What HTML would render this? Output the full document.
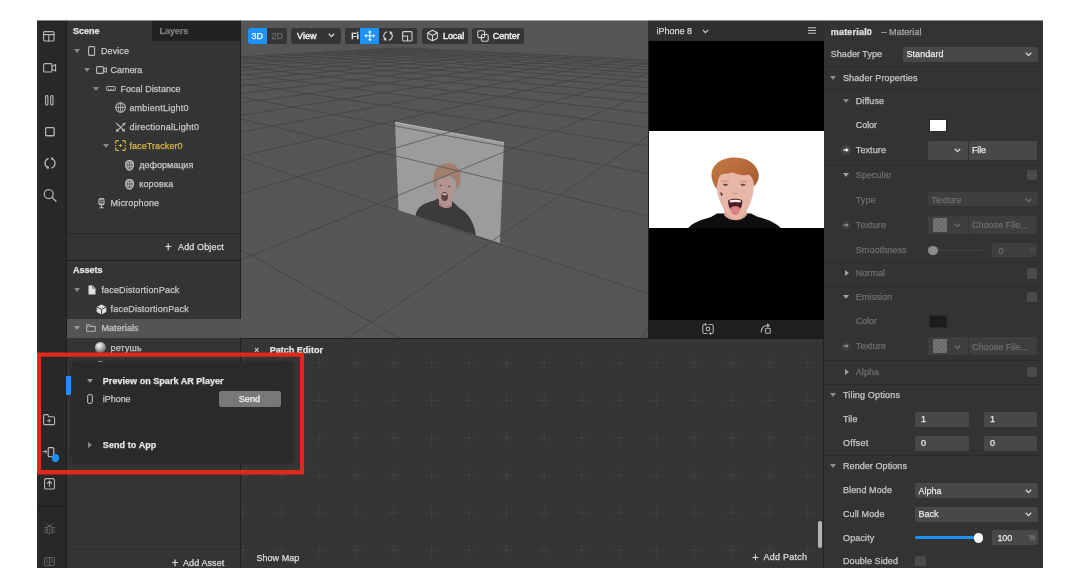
<!DOCTYPE html>
<html lang="en"><head><meta charset="utf-8"><title>Spark AR Studio</title>
<style>
*{box-sizing:border-box;margin:0;padding:0}
html,body{width:1080px;height:588px;background:#fff;overflow:hidden}
body{font-family:"Liberation Sans","DejaVu Sans",sans-serif;font-size:9px;color:#d6d6d6;position:relative}
.a{position:absolute}
.t{position:absolute;white-space:nowrap;line-height:12px;height:12px;font-size:9px;color:#c6c6c6;-webkit-text-stroke:0.25px}
.b{font-weight:bold;color:#e4e4e4}
.dim{color:#787878}
.f{position:absolute;background:#474747;border-radius:1.5px}
.sep{position:absolute;left:824px;width:219px;height:1px;background:#2b2b2b}
svg{position:absolute;overflow:visible}
.tri{position:absolute;width:0;height:0;border-left:3px solid transparent;border-right:3px solid transparent;border-top:4px solid #8a8a8a}
.trr{position:absolute;width:0;height:0;border-top:3px solid transparent;border-bottom:3px solid transparent;border-left:4px solid #8a8a8a}
</style></head>
<body>
<div id="app" style="position:absolute;left:0;top:0;width:1080px;height:588px;will-change:transform">
<div class="a" style="left:37px;top:20px;width:1006px;height:548px;background:#353535;"></div>
<div class="a" style="left:37px;top:20px;width:29px;height:548px;background:#282828;"></div>
<div class="a" style="left:66.5px;top:20px;width:174.5px;height:548px;background:#343434;"></div>
<div class="a" style="left:152px;top:20px;width:89px;height:21px;background:#222222;"></div>
<div class="a" style="left:241px;top:20px;width:407px;height:318px;background:#565656;"></div>
<div class="a" style="left:648px;top:20px;width:176px;height:319px;background:#1e1e1e;"></div>
<div class="a" style="left:824px;top:20px;width:219px;height:548px;background:#333333;"></div>
<div class="a" style="left:241px;top:339px;width:583px;height:229px;background:#353535;"></div>
<div class="a" style="left:240px;top:20px;width:1px;height:548px;background:#1f1f1f;"></div>
<div class="a" style="left:823px;top:20px;width:1px;height:548px;background:#1f1f1f;"></div>
<div class="a" style="left:241px;top:338px;width:583px;height:1px;background:#1f1f1f;"></div>
<svg style="left:241px;top:20px;overflow:hidden" width="407" height="318" viewBox="0 0 407 318"><defs><clipPath id="vpl"><polygon points="154,101.800 263,122.200 258.900,223 157.500,190.400"/></clipPath></defs><g stroke="#434343" stroke-width="0.85" fill="none"><line x1="-540.7" y1="67.4" x2="159.1" y2="27.8"/><line x1="-549.4" y1="72.0" x2="173.1" y2="28.5"/><line x1="-559.3" y1="77.3" x2="187.8" y2="29.2"/><line x1="-570.8" y1="83.5" x2="203.3" y2="29.9"/><line x1="-584.3" y1="90.7" x2="219.6" y2="30.7"/><line x1="-600.4" y1="99.3" x2="236.8" y2="31.6"/><line x1="-619.8" y1="109.7" x2="254.9" y2="32.4"/><line x1="-643.6" y1="122.4" x2="274.0" y2="33.4"/><line x1="-673.8" y1="138.6" x2="294.3" y2="34.4"/><line x1="-713.2" y1="159.6" x2="315.9" y2="35.4"/><line x1="-766.6" y1="188.2" x2="338.7" y2="36.5"/><line x1="-843.2" y1="229.1" x2="363.1" y2="37.7"/><line x1="-962.4" y1="292.9" x2="389.1" y2="39.0"/><line x1="-1173.5" y1="405.8" x2="416.9" y2="40.3"/><line x1="-1649.0" y1="660.1" x2="446.6" y2="41.8"/><line x1="-3719.0" y1="1767.2" x2="478.6" y2="43.4"/><line x1="-2643.1" y1="2164.8" x2="513.1" y2="45.0"/><line x1="-959.2" y1="2786.9" x2="550.3" y2="46.8"/><line x1="2050.9" y1="3899.1" x2="590.6" y2="48.8"/><line x1="8971.3" y1="6456.1" x2="634.5" y2="51.0"/><line x1="-540.7" y1="67.4" x2="-14613.7" y2="7594.0"/><line x1="-454.0" y1="62.5" x2="-4432.8" y2="6352.8"/><line x1="-379.8" y1="58.3" x2="2817.7" y2="5468.8"/><line x1="-315.6" y1="54.6" x2="3127.8" y2="1966.6"/><line x1="-259.5" y1="51.5" x2="1321.6" y2="578.9"/><line x1="-210.0" y1="48.7" x2="1011.8" y2="340.9"/><line x1="-166.1" y1="46.2" x2="883.5" y2="242.3"/><line x1="-126.9" y1="44.0" x2="813.3" y2="188.4"/><line x1="-91.6" y1="42.0" x2="769.1" y2="154.4"/><line x1="-59.7" y1="40.2" x2="738.6" y2="131.0"/><line x1="-30.7" y1="38.5" x2="716.4" y2="113.9"/><line x1="-4.2" y1="37.0" x2="699.4" y2="100.9"/><line x1="20.0" y1="35.6" x2="686.1" y2="90.6"/><line x1="42.3" y1="34.4" x2="675.3" y2="82.3"/><line x1="62.8" y1="33.2" x2="666.4" y2="75.5"/><line x1="81.9" y1="32.1" x2="658.9" y2="69.7"/><line x1="99.5" y1="31.1" x2="652.6" y2="64.9"/><line x1="116.0" y1="30.2" x2="647.1" y2="60.7"/><line x1="131.3" y1="29.3" x2="642.3" y2="57.0"/><line x1="145.6" y1="28.5" x2="638.2" y2="53.8"/><line x1="159.1" y1="27.8" x2="634.5" y2="51.0"/></g><polygon points="154,101.800 263,122.200 258.900,223 157.500,190.400" fill="#9c9c9c"/><line x1="154" y1="102.300" x2="263" y2="122.700" stroke="#b4b4b4" stroke-width="1"/><g clip-path="url(#vpl)"><path d="M174.400,196 C176,185 186,182.500 192,181 L198,178 L211,181 L219,188.500 C228,193 233.500,204 235,216 Z" fill="#3b3b3b"/><path d="M198,176 L198,185 C202,189 208,189 211,186 L211,176 Z" fill="#a88a84"/><ellipse cx="204.300" cy="171.500" rx="8.300" ry="14.500" fill="#b4948e"/><path d="M194.500,170 C190,158 193,146 204,143.500 C215,142 221,150 219.500,160 C219,165 217,168 215.500,170 C216,162 213,157 208,156 C203,158 199,158 197,159 C195.500,162 195.500,166 194.500,170 Z" fill="#a27e6c"/><ellipse cx="203.600" cy="176.500" rx="3.300" ry="4.600" fill="#5c4444"/><ellipse cx="203.600" cy="174.300" rx="2.400" ry="1" fill="#c8bcbc"/><ellipse cx="199.600" cy="165.500" rx="1.500" ry="0.700" fill="#6a5550"/><ellipse cx="208.200" cy="166.500" rx="1.500" ry="0.700" fill="#6a5550"/></g><g stroke="#585858" stroke-width="0.85" fill="none" clip-path="url(#vpl)"><line x1="-540.7" y1="67.4" x2="159.1" y2="27.8"/><line x1="-549.4" y1="72.0" x2="173.1" y2="28.5"/><line x1="-559.3" y1="77.3" x2="187.8" y2="29.2"/><line x1="-570.8" y1="83.5" x2="203.3" y2="29.9"/><line x1="-584.3" y1="90.7" x2="219.6" y2="30.7"/><line x1="-600.4" y1="99.3" x2="236.8" y2="31.6"/><line x1="-619.8" y1="109.7" x2="254.9" y2="32.4"/><line x1="-643.6" y1="122.4" x2="274.0" y2="33.4"/><line x1="-673.8" y1="138.6" x2="294.3" y2="34.4"/><line x1="-713.2" y1="159.6" x2="315.9" y2="35.4"/><line x1="-766.6" y1="188.2" x2="338.7" y2="36.5"/><line x1="-843.2" y1="229.1" x2="363.1" y2="37.7"/><line x1="-962.4" y1="292.9" x2="389.1" y2="39.0"/><line x1="-1173.5" y1="405.8" x2="416.9" y2="40.3"/><line x1="-1649.0" y1="660.1" x2="446.6" y2="41.8"/><line x1="-3719.0" y1="1767.2" x2="478.6" y2="43.4"/><line x1="-2643.1" y1="2164.8" x2="513.1" y2="45.0"/><line x1="-959.2" y1="2786.9" x2="550.3" y2="46.8"/><line x1="2050.9" y1="3899.1" x2="590.6" y2="48.8"/><line x1="8971.3" y1="6456.1" x2="634.5" y2="51.0"/><line x1="-540.7" y1="67.4" x2="-14613.7" y2="7594.0"/><line x1="-454.0" y1="62.5" x2="-4432.8" y2="6352.8"/><line x1="-379.8" y1="58.3" x2="2817.7" y2="5468.8"/><line x1="-315.6" y1="54.6" x2="3127.8" y2="1966.6"/><line x1="-259.5" y1="51.5" x2="1321.6" y2="578.9"/><line x1="-210.0" y1="48.7" x2="1011.8" y2="340.9"/><line x1="-166.1" y1="46.2" x2="883.5" y2="242.3"/><line x1="-126.9" y1="44.0" x2="813.3" y2="188.4"/><line x1="-91.6" y1="42.0" x2="769.1" y2="154.4"/><line x1="-59.7" y1="40.2" x2="738.6" y2="131.0"/><line x1="-30.7" y1="38.5" x2="716.4" y2="113.9"/><line x1="-4.2" y1="37.0" x2="699.4" y2="100.9"/><line x1="20.0" y1="35.6" x2="686.1" y2="90.6"/><line x1="42.3" y1="34.4" x2="675.3" y2="82.3"/><line x1="62.8" y1="33.2" x2="666.4" y2="75.5"/><line x1="81.9" y1="32.1" x2="658.9" y2="69.7"/><line x1="99.5" y1="31.1" x2="652.6" y2="64.9"/><line x1="116.0" y1="30.2" x2="647.1" y2="60.7"/><line x1="131.3" y1="29.3" x2="642.3" y2="57.0"/><line x1="145.6" y1="28.5" x2="638.2" y2="53.8"/><line x1="159.1" y1="27.8" x2="634.5" y2="51.0"/></g></svg>
<div class="a" style="left:247.5px;top:27.5px;width:39.0px;height:16.5px;background:#353535;border-radius:2.5px"></div>
<div class="a" style="left:247.5px;top:27.5px;width:19.5px;height:16.5px;background:#1a93ff;border-radius:2.5px 0 0 2.5px"></div>
<div class="t " style="left:251.5px;top:29.8px;color:#fff;font-size:9px">3D</div>
<div class="t " style="left:271.5px;top:29.8px;color:#6d6d6d;font-size:9px">2D</div>
<div class="a" style="left:290.5px;top:27.5px;width:50.0px;height:16.5px;background:#353535;border-radius:2.5px"></div>
<div class="t " style="left:297px;top:29.8px;letter-spacing:0.04px;color:#ececec;-webkit-text-stroke:0.45px">View</div>
<svg style="left:328px;top:33px;" width="7" height="5" viewBox="0 0 7 5"><path d="M0.8,0.8 L3.5,3.6 L6.2,0.8" fill="none" stroke="#d8d8d8" stroke-width="1.3"/></svg>
<div class="a" style="left:344.7px;top:27.5px;width:72.80000000000001px;height:16.5px;background:#353535;border-radius:2.5px"></div>
<div class="t " style="left:351.2px;top:29.8px;color:#ececec;-webkit-text-stroke:0.45px">Fi</div>
<div class="a" style="left:360px;top:27.5px;width:18.600000000000023px;height:16.5px;background:#1a93ff;border-radius:0"></div>
<svg style="left:363.7px;top:30.2px;" width="11.6" height="11.6" viewBox="0 0 11.6 11.6"><g stroke="#fff" stroke-width="1.100" fill="none"><path d="M5.800,1.600V10M1.600,5.800H10"/></g><path d="M5.800,0.300L7.600,2.600H4ZM5.800,11.300L7.600,9H4ZM0.300,5.800L2.600,4V7.600ZM11.300,5.800L9,4V7.600Z" fill="#fff"/></svg>
<svg style="left:382.2px;top:29.8px;" width="12" height="12" viewBox="0 0 12 12"><path d="M5.25,1.77A4.3,4.3 0 0 0 2.96,9.04M6.75,10.23A4.3,4.3 0 0 0 9.04,2.96" stroke="#d0d0d0" stroke-width="1.15" fill="none"/><path d="M4.66,10.74L1.19,9.96L3.88,7.27ZM7.34,1.26L10.81,2.04L8.12,4.73Z" fill="#d0d0d0"/></svg>
<svg style="left:402.2px;top:30.6px;" width="10.6" height="10.6" viewBox="0 0 10.6 10.6"><g stroke="#d0d0d0" stroke-width="1.100" fill="none"><rect x="0.600" y="0.600" width="9.400" height="9.400" rx="1.200"/><path d="M0.600,5H5.600V10"/></g></svg>
<div class="a" style="left:421.7px;top:27.5px;width:46.10000000000002px;height:16.5px;background:#353535;border-radius:2.5px"></div>
<svg style="left:425.8px;top:29.4px;" width="13" height="13" viewBox="0 0 13 13"><g stroke="#d8d8d8" stroke-width="1.05" fill="none" stroke-linejoin="round"><path d="M6.5,1.2L11.3,3.8V9.2L6.5,11.8L1.7,9.2V3.8Z"/><path d="M1.7,3.8L6.5,6.5L11.3,3.8M6.5,6.5V11.8"/></g></svg>
<div class="t " style="left:443px;top:29.8px;letter-spacing:-0.08px;color:#ececec;-webkit-text-stroke:0.45px">Local</div>
<div class="a" style="left:471.7px;top:27.5px;width:52.69999999999999px;height:16.5px;background:#353535;border-radius:2.5px"></div>
<svg style="left:477px;top:29.5px;" width="12" height="12" viewBox="0 0 12 12"><g stroke="#d8d8d8" stroke-width="1.05" fill="none"><rect x="0.8" y="0.8" width="6.8" height="6.8" rx="1.4"/><rect x="4.4" y="4.4" width="6.8" height="6.8" rx="1.4"/></g></svg>
<div class="t " style="left:492.8px;top:29.8px;letter-spacing:0.01px;color:#ececec;-webkit-text-stroke:0.45px">Center</div>
<div class="a" style="left:648px;top:20px;width:176px;height:20.5px;background:#2f2f2f;"></div>
<div class="t " style="left:656.5px;top:24.5px;color:#d8d8d8;font-size:9px">iPhone 8</div>
<svg style="left:702px;top:28.6px;" width="7" height="5" viewBox="0 0 7 5"><path d="M0.8,0.8 L3.5,3.6 L6.2,0.8" fill="none" stroke="#d0d0d0" stroke-width="1.2"/></svg>
<svg style="left:807.5px;top:27px;" width="8" height="7" viewBox="0 0 8 7"><path d="M0,0.8H8M0,3.5H8M0,6.2H8" stroke="#c8c8c8" stroke-width="1"/></svg>
<div class="a" style="left:649px;top:40.5px;width:174.5px;height:279px;background:#000;"></div>
<div class="a" style="left:649px;top:130.5px;width:174.5px;height:97.5px;background:#fff;"></div>
<svg style="left:649px;top:130.5px;overflow:hidden" width="174.5" height="97.5" viewBox="0 0 174.5 97.5"><defs><filter id="sblur" x="-5%" y="-5%" width="110%" height="110%"><feGaussianBlur stdDeviation="0.45"/></filter><linearGradient id="hairg" x1="0" y1="0" x2="1" y2="1"><stop offset="0" stop-color="#c47a45"/><stop offset="0.55" stop-color="#b5683a"/><stop offset="1" stop-color="#9a5530"/></linearGradient></defs><g filter="url(#sblur)"><path d="M38,98.500 C43,91 54,88.500 62,86 L68,82.500 L102,82.500 L109,86 C119,88.500 128,92 133,98.500 Z" fill="#0b0b0d"/><path d="M76,76 L75,84 C80,91 93,91 98,84 L97,76 Z" fill="#dca595"/><path d="M68,48 C67,56 68.500,64 71,70 C73.500,77 79,87.800 86.500,87.800 C94,87.800 99.500,78 102,70 C104.500,63 105.500,55 104.500,47 C102,38 94,35 86,35 C77,35 70,39 68,48 Z" fill="#e8b6a7"/><path d="M67.500,58 C65,54 62,48 62.500,43 C63,35 70,28.500 80,27 C90,25.500 101,28 106,35 C109,39 110.500,43 109.500,47.500 C108.500,51 106.500,53.500 105,55.500 C105,50 103.500,46 100,43.500 C96,45 90,44 84,41.500 C79,42.500 74,43 71.500,44 C69,47 68.500,52 67.500,58 Z" fill="url(#hairg)"/><path d="M79.200,69.500 C82,67.300 90.500,67.300 93.200,69.500 C93.500,75 91.500,80.500 86.200,80.500 C81,80.500 79,75 79.200,69.500 Z" fill="#4d1a20"/><path d="M80.500,69.600 C83,68.300 89.500,68.300 92,69.600 L91.500,71.600 C88.500,70.800 84,70.800 81,71.600 Z" fill="#f6eeee"/><path d="M81.500,77 C83,74.800 89.500,74.800 91,77 C91,81.500 89,84 86.200,84 C83.500,84 81.500,81.500 81.500,77 Z" fill="#dc8085"/><ellipse cx="76.500" cy="53.800" rx="2.500" ry="1.100" fill="#6a4a42"/><ellipse cx="94" cy="53.800" rx="2.500" ry="1.100" fill="#6a4a42"/><path d="M73,50.800 C75,49.800 78,49.800 80,50.800M91,50.800 C93,49.800 96,49.800 98,50.800" stroke="#b07a5e" stroke-width="0.700" fill="none"/><path d="M83.500,62 C84.500,63.200 87.500,63.200 88.500,62" stroke="#c48878" stroke-width="0.800" fill="none"/><path d="M71.300,60.500 L74,63.500 L72,65 Z" fill="#3a2a2e"/></g></svg>
<div class="a" style="left:648px;top:319.5px;width:176px;height:19.5px;background:#1e1e1e;"></div>
<svg style="left:700.5px;top:322px;" width="14" height="14" viewBox="0 0 14 14"><g stroke="#aeaeae" stroke-width="1.1" fill="none"><path d="M5,2.500H3.300A1.500,1.500 0 0 0 1.800,4V10A1.500,1.500 0 0 0 3.300,11.500H6.500M9,11.500H10.700A1.500,1.500 0 0 0 12.200,10V4A1.500,1.500 0 0 0 10.700,2.500H7.500"/><circle cx="7" cy="7" r="1.900"/><path d="M4,1L5.600,2.500L4,4M10,10L8.400,11.500L10,13" stroke-width="1"/></g></svg>
<svg style="left:759px;top:322px;" width="14" height="14" viewBox="0 0 14 14"><g stroke="#aeaeae" stroke-width="1.100" fill="none"><rect x="6.600" y="6.300" width="4.600" height="5" rx="0.600"/><path d="M2.200,10.500C2.200,6 4.800,3.400 9,3.400"/></g><path d="M8.200,1L11,3.400L8.200,5.800Z" fill="#aeaeae"/></svg>
<div class="a" style="left:65.5px;top:20px;width:1px;height:548px;background:#1d1d1d;"></div>
<svg style="left:43.1px;top:31.4px;" width="11.6" height="10.6" viewBox="0 0 11.6 10.6"><g stroke="#b6b6b6" stroke-width="1.15" fill="none" stroke-linecap="round" stroke-linejoin="round"><rect x="0.600" y="0.600" width="10.400" height="9.400" rx="1"/><path d="M0.600,3.700H11M5.800,3.700V10"/></g></svg>
<svg style="left:43.0px;top:63.1px;" width="13.2" height="9.6" viewBox="0 0 13.2 9.6"><g stroke="#b6b6b6" stroke-width="1.15" fill="none" stroke-linecap="round" stroke-linejoin="round"><rect x="0.600" y="0.600" width="8.400" height="8.400" rx="1.300"/><path d="M9,3.400L12.600,1.600V8L9,6.200"/></g></svg>
<svg style="left:44.95px;top:95.0px;" width="8.6" height="10.6" viewBox="0 0 8.6 10.6"><g stroke="#b6b6b6" stroke-width="1.1" fill="none" stroke-linecap="round" stroke-linejoin="round"><rect x="0.600" y="0.600" width="2.300" height="9.400" rx="1"/><rect x="5.700" y="0.600" width="2.300" height="9.400" rx="1"/></g></svg>
<svg style="left:44.9px;top:126.8px;" width="9.8" height="9.4" viewBox="0 0 9.8 9.4"><g stroke="#b6b6b6" stroke-width="1.3" fill="none" stroke-linecap="round" stroke-linejoin="round"><rect x="0.650" y="0.650" width="8.500" height="8.100" rx="0.900"/></g></svg>
<svg style="left:43.7px;top:156.5px;" width="12" height="12.4" viewBox="0 0 12 12.4"><g stroke="#b6b6b6" stroke-width="1.25" fill="none" stroke-linecap="round" stroke-linejoin="round"><path d="M4.13,1.56A5,5 0 0 0 3.65,10.61M7.87,10.84A5,5 0 0 0 8.35,1.79"/><path d="M5.49,11.59L2.40,11.87L3.99,8.87ZM6.51,0.81L9.60,0.53L8.01,3.53Z" fill="#b6b6b6" stroke="none"/></g></svg>
<svg style="left:43.2px;top:188.0px;" width="14" height="14" viewBox="0 0 14 14"><g stroke="#b6b6b6" stroke-width="1.25" fill="none" stroke-linecap="round" stroke-linejoin="round"><circle cx="5.700" cy="6" r="4.500"/><path d="M9,9.300L13,13.300"/></g></svg>
<svg style="left:43.0px;top:414.4px;" width="12.2" height="11.2" viewBox="0 0 12.2 11.2"><g stroke="#b6b6b6" stroke-width="1.1" fill="none" stroke-linecap="round" stroke-linejoin="round"><path d="M0.600,2.800V9.400A1.200,1.200 0 0 0 1.800,10.600H10.400A1.200,1.200 0 0 0 11.600,9.400V3.900A1.200,1.200 0 0 0 10.400,2.700H5.800L4.700,0.600H1.800A1.200,1.200 0 0 0 0.600,1.800Z"/><path d="M6.100,5V8.400M4.400,6.700H7.800" stroke-width="0.900"/></g></svg>
<svg style="left:42px;top:446px;" width="14" height="13" viewBox="0 0 14 13"><g stroke="#c4c4c4" fill="none" stroke-linejoin="round"><rect x="6.200" y="1.600" width="5.600" height="9.200" rx="1" stroke-width="1.100"/><path d="M0.800,5.700H4.600M3.300,4.300L4.800,5.700L3.300,7.100" stroke-width="1"/></g></svg>
<div class="a" style="left:51.500px;top:454.400px;width:7.400px;height:7.400px;border-radius:50%;background:#1a93ff"></div>
<svg style="left:43.8px;top:477.8px;" width="11" height="11.6" viewBox="0 0 11 11.6"><g stroke="#b6b6b6" stroke-width="1.1" fill="none" stroke-linecap="round" stroke-linejoin="round"><rect x="0.600" y="0.600" width="9.800" height="10.400" rx="1.300"/><path d="M5.500,8.600V3.400M3.400,5.300L5.500,3.200L7.600,5.300"/></g></svg>
<div class="a" style="left:37px;top:506px;width:28.5px;height:1px;background:#1a1a1a;"></div>
<svg style="left:43.7px;top:523.3px;" width="11.4" height="12.4" viewBox="0 0 11.4 12.4"><g stroke="#6a6a6a" stroke-width="0.9" fill="none" stroke-linecap="round" stroke-linejoin="round"><rect x="3.200" y="3" width="5" height="7.600" rx="2.300"/><path d="M3.600,0.800L4.700,3M7.800,0.800L6.700,3M0.600,4.600H3.200M8.200,4.600H10.800M0.600,7H3.200M8.200,7H10.800M0.600,9.400H3.200M8.200,9.400H10.800M5.700,5V9" stroke-width="0.800"/></g></svg>
<svg style="left:43.9px;top:556.5px;" width="11" height="9" viewBox="0 0 11 9"><g stroke="#6a6a6a" stroke-width="0.9" fill="none" stroke-linecap="round" stroke-linejoin="round"><rect x="0.600" y="0.600" width="9.800" height="7.800" rx="0.700"/><path d="M5.500,0.600V8.400M2.200,3H3.900M2.200,5H3.900M7.100,3H8.800M7.100,5H8.800" stroke-width="0.800"/></g></svg>
<div class="t b" style="left:73px;top:25.4px;letter-spacing:-0.02px;">Scene</div>
<div class="t b" style="left:159.5px;top:25.4px;letter-spacing:-0.05px;color:#7e7e7e">Layers</div>
<div class="tri" style="left:74px;top:48.8px;border-top-color:#8a8a8a"></div>
<svg style="left:87.85000000000001px;top:45.8px;" width="7.2" height="10" viewBox="0 0 7.2 10"><g stroke="#b8b8b8" stroke-width="1.1" fill="none" stroke-linejoin="round"><rect x="0.600" y="0.600" width="6" height="8.800" rx="1"/></g></svg>
<div class="t " style="left:101px;top:44.8px;letter-spacing:0.08px;">Device</div>
<div class="tri" style="left:84px;top:67.8px;border-top-color:#8a8a8a"></div>
<svg style="left:96.1px;top:66.0px;" width="11" height="8" viewBox="0 0 11 8"><g stroke="#b8b8b8" stroke-width="1.1" fill="none" stroke-linejoin="round"><rect x="0.600" y="0.600" width="6.800" height="6.800" rx="1"/><path d="M7.900,2.600L10.400,1.800V6.200L7.900,5.400Z"/></g></svg>
<div class="t " style="left:110.6px;top:63.8px;letter-spacing:-0.07px;">Camera</div>
<div class="tri" style="left:93.3px;top:86.6px;border-top-color:#8a8a8a"></div>
<svg style="left:105.7px;top:85.89999999999999px;" width="10.4" height="5.4" viewBox="0 0 10.4 5.4"><g stroke="#b8b8b8" stroke-width="1" fill="none" stroke-linejoin="round"><rect x="0.600" y="0.600" width="8.800" height="3.800" rx="0.600"/><path d="M2.600,2.600V4.400M4.200,2.600V4.400M5.800,2.600V4.400M7.400,2.600V4.400" stroke-width="0.700"/></g></svg>
<div class="t " style="left:120.4px;top:82.6px;letter-spacing:0.05px;">Focal Distance</div>
<svg style="left:114.9px;top:102.3px;" width="11" height="11" viewBox="0 0 11 11"><g stroke="#b8b8b8" stroke-width="1.1" fill="none" stroke-linejoin="round"><circle cx="5.500" cy="5.500" r="4.800"/><ellipse cx="5.500" cy="5.500" rx="2.100" ry="4.800" stroke-width="0.800"/><path d="M0.700,5.500H10.300M5.500,0.700V10.300" stroke-width="0.800"/></g></svg>
<div class="t " style="left:129.4px;top:102.0px;letter-spacing:0.22px;">ambientLight0</div>
<svg style="left:115.2px;top:122.3px;" width="11" height="10.6" viewBox="0 0 11 10.6"><g stroke="#b8b8b8" stroke-width="1" fill="none" stroke-linejoin="round"><path d="M1.200,1L8.600,8.200M9.400,1.800L2.400,8.600" stroke-width="1.100"/><path d="M10.200,9.800L6.600,9L9.400,6.200ZM0.800,10L1.600,6.600L4.400,9.200ZM10.600,0.600L9.800,3.800L7.200,1.400Z" fill="#b8b8b8" stroke="none"/></g></svg>
<div class="t " style="left:129.4px;top:121.0px;letter-spacing:0.26px;">directionalLight0</div>
<div class="tri" style="left:102.5px;top:143.5px;border-top-color:#8a8a8a"></div>
<svg style="left:114.9px;top:140.3px;" width="11" height="11" viewBox="0 0 11 11"><g stroke="#d4b84a" stroke-width="1.2" fill="none" stroke-linejoin="round"><path d="M0.700,3.600V1.700A1,1 0 0 1 1.700,0.700H3.800M7.200,0.700H9.300A1,1 0 0 1 10.300,1.700V3.600M10.300,7.400V9.300A1,1 0 0 1 9.300,10.300H7.200M3.800,10.300H1.700A1,1 0 0 1 0.700,9.300V7.400M0.700,4.900V6.100M10.300,4.900V6.100"/><path d="M5.500,3.900V7.100M3.900,5.500H7.100" stroke-width="1.100"/></g></svg>
<div class="t " style="left:129.4px;top:139.5px;letter-spacing:0.09px;color:#d4b84a">faceTracker0</div>
<svg style="left:125.19999999999999px;top:159.6px;" width="9" height="10.8" viewBox="0 0 9 10.8"><g stroke="#c4c4c4" stroke-width="1" fill="none" stroke-linejoin="round"><path d="M4.500,0.700C7.300,0.700 8.300,2.400 8.300,4.700C8.300,7.500 6.700,10.100 4.500,10.100C2.300,10.100 0.700,7.500 0.700,4.700C0.700,2.400 1.700,0.700 4.500,0.700Z" stroke-width="1.300" fill="rgba(200,200,200,0.25)"/><path d="M3.200,1.200V9.600M5.800,1.200V9.600M1,3.400H8M1,6.400H8" stroke-width="0.700"/></g></svg>
<div class="t " style="left:139.2px;top:158.5px;letter-spacing:0.02px;">деформация</div>
<svg style="left:125.19999999999999px;top:178.79999999999998px;" width="9" height="10.8" viewBox="0 0 9 10.8"><g stroke="#c4c4c4" stroke-width="1" fill="none" stroke-linejoin="round"><path d="M4.500,0.700C7.300,0.700 8.300,2.400 8.300,4.700C8.300,7.500 6.700,10.100 4.500,10.100C2.300,10.100 0.700,7.500 0.700,4.700C0.700,2.400 1.700,0.700 4.500,0.700Z" stroke-width="1.300" fill="rgba(200,200,200,0.25)"/><path d="M3.200,1.200V9.600M5.800,1.200V9.600M1,3.400H8M1,6.400H8" stroke-width="0.700"/></g></svg>
<div class="t " style="left:139.2px;top:177.9px;letter-spacing:0.19px;">коровка</div>
<svg style="left:97.9px;top:197.8px;" width="7" height="10.4" viewBox="0 0 7 10.4"><g stroke="#c8c8c8" stroke-width="1" fill="none" stroke-linejoin="round"><rect x="1" y="0.600" width="5" height="6.200" rx="1" fill="rgba(210,210,210,0.55)"/><path d="M1,2.600H6M1,4.400H6" stroke="#444" stroke-width="0.700"/><path d="M3.500,6.800V9.600M1.400,9.800H5.600" stroke-width="1"/></g></svg>
<div class="t " style="left:110.6px;top:196.7px;letter-spacing:0.16px;">Microphone</div>
<div class="a" style="left:67px;top:233px;width:174px;height:1px;background:#262626;"></div>
<div class="t " style="left:164.8px;top:240.8px;font-size:12px;color:#d8d8d8">+</div>
<div class="t " style="left:178px;top:241.0px;letter-spacing:0.14px;color:#dcdcdc">Add Object</div>
<div class="a" style="left:67px;top:260px;width:174px;height:1px;background:#1c1c1c;"></div>
<div class="t b" style="left:73px;top:264.4px;letter-spacing:-0.02px;">Assets</div>
<div class="tri" style="left:74px;top:288.2px;border-top-color:#8a8a8a"></div>
<svg style="left:87.5px;top:285px;" width="8" height="10" viewBox="0 0 8 10"><path d="M0.500,0.500H4.800L7.500,3.200V9.500H0.500Z" fill="#e0e0e0"/><path d="M4.800,0.500V3.200H7.500" fill="none" stroke="#353535" stroke-width="0.700"/></svg>
<div class="t " style="left:101.4px;top:284.2px;letter-spacing:0.17px;">faceDistortionPack</div>
<svg style="left:96.2px;top:303.7px;" width="11" height="11" viewBox="0 0 11 11"><path d="M5.500,0.500L10.300,2.900V8.100L5.500,10.500L0.700,8.100V2.900Z" fill="#e0e0e0"/><path d="M0.700,2.900L5.500,5.400L10.300,2.900M5.500,5.400V10.500" fill="none" stroke="#353535" stroke-width="0.900"/></svg>
<div class="t " style="left:110.6px;top:303.2px;letter-spacing:0.18px;">faceDistortionPack</div>
<div class="a" style="left:67px;top:319px;width:174px;height:18.5px;background:#545454;"></div>
<div class="tri" style="left:74px;top:326.4px;border-top-color:#9a9a9a"></div>
<svg style="left:86.2px;top:324.4px;" width="10" height="8" viewBox="0 0 10 8"><g stroke="#b8b8b8" stroke-width="1" fill="none" stroke-linejoin="round"><path d="M0.700,1.700V7.300H9.300V2.300H4.600L3.800,0.700H0.700Z"/><path d="M0.700,2.600H9.300" stroke-width="0.600"/></g></svg>
<div class="t " style="left:101.4px;top:322.4px;letter-spacing:0.08px;">Materials</div>
<div class="a" style="left:94.9px;top:342.0px;width:11px;height:11px;border-radius:50%;background:radial-gradient(circle at 38% 32%,#fafafa 0%,#b8b8b8 35%,#5a5a5a 80%,#444 100%)"></div>
<div class="t " style="left:110.6px;top:342.0px;letter-spacing:0.14px;">ретушь</div>
<div class="a" style="left:94.9px;top:361.0px;width:11px;height:11px;border-radius:50%;background:radial-gradient(circle at 38% 32%,#fafafa 0%,#b8b8b8 35%,#5a5a5a 80%,#444 100%)"></div>
<div class="a" style="left:67px;top:549px;width:174px;height:1px;background:#2d2d2d;"></div>
<div class="t " style="left:171.5px;top:557.0px;font-size:12px;color:#d8d8d8">+</div>
<div class="t " style="left:183px;top:557.3px;letter-spacing:0.10px;color:#dcdcdc">Add Asset</div>
<svg style="left:241px;top:339px;overflow:hidden" width="583" height="229" viewBox="0 0 583 229"><g stroke="#424242" stroke-width="1" fill="none"><path d="M-3.2,23.9h12M2.8,17.9v12"/><path d="M-3.2,61.4h12M2.8,55.4v12"/><path d="M-3.2,98.9h12M2.8,92.9v12"/><path d="M-3.2,136.4h12M2.8,130.4v12"/><path d="M-3.2,173.9h12M2.8,167.9v12"/><path d="M-3.2,211.4h12M2.8,205.4v12"/><path d="M34.4,23.9h12M40.4,17.9v12"/><path d="M34.4,61.4h12M40.4,55.4v12"/><path d="M34.4,98.9h12M40.4,92.9v12"/><path d="M34.4,136.4h12M40.4,130.4v12"/><path d="M34.4,173.9h12M40.4,167.9v12"/><path d="M34.4,211.4h12M40.4,205.4v12"/><path d="M71.9,23.9h12M77.9,17.9v12"/><path d="M71.9,61.4h12M77.9,55.4v12"/><path d="M71.9,98.9h12M77.9,92.9v12"/><path d="M71.9,136.4h12M77.9,130.4v12"/><path d="M71.9,173.9h12M77.9,167.9v12"/><path d="M71.9,211.4h12M77.9,205.4v12"/><path d="M109.4,23.9h12M115.4,17.9v12"/><path d="M109.4,61.4h12M115.4,55.4v12"/><path d="M109.4,98.9h12M115.4,92.9v12"/><path d="M109.4,136.4h12M115.4,130.4v12"/><path d="M109.4,173.9h12M115.4,167.9v12"/><path d="M109.4,211.4h12M115.4,205.4v12"/><path d="M147.0,23.9h12M153.0,17.9v12"/><path d="M147.0,61.4h12M153.0,55.4v12"/><path d="M147.0,98.9h12M153.0,92.9v12"/><path d="M147.0,136.4h12M153.0,130.4v12"/><path d="M147.0,173.9h12M153.0,167.9v12"/><path d="M147.0,211.4h12M153.0,205.4v12"/><path d="M184.6,23.9h12M190.6,17.9v12"/><path d="M184.6,61.4h12M190.6,55.4v12"/><path d="M184.6,98.9h12M190.6,92.9v12"/><path d="M184.6,136.4h12M190.6,130.4v12"/><path d="M184.6,173.9h12M190.6,167.9v12"/><path d="M184.6,211.4h12M190.6,205.4v12"/><path d="M222.1,23.9h12M228.1,17.9v12"/><path d="M222.1,61.4h12M228.1,55.4v12"/><path d="M222.1,98.9h12M228.1,92.9v12"/><path d="M222.1,136.4h12M228.1,130.4v12"/><path d="M222.1,173.9h12M228.1,167.9v12"/><path d="M222.1,211.4h12M228.1,205.4v12"/><path d="M259.6,23.9h12M265.6,17.9v12"/><path d="M259.6,61.4h12M265.6,55.4v12"/><path d="M259.6,98.9h12M265.6,92.9v12"/><path d="M259.6,136.4h12M265.6,130.4v12"/><path d="M259.6,173.9h12M265.6,167.9v12"/><path d="M259.6,211.4h12M265.6,205.4v12"/><path d="M297.2,23.9h12M303.2,17.9v12"/><path d="M297.2,61.4h12M303.2,55.4v12"/><path d="M297.2,98.9h12M303.2,92.9v12"/><path d="M297.2,136.4h12M303.2,130.4v12"/><path d="M297.2,173.9h12M303.2,167.9v12"/><path d="M297.2,211.4h12M303.2,205.4v12"/><path d="M334.8,23.9h12M340.8,17.9v12"/><path d="M334.8,61.4h12M340.8,55.4v12"/><path d="M334.8,98.9h12M340.8,92.9v12"/><path d="M334.8,136.4h12M340.8,130.4v12"/><path d="M334.8,173.9h12M340.8,167.9v12"/><path d="M334.8,211.4h12M340.8,205.4v12"/><path d="M372.3,23.9h12M378.3,17.9v12"/><path d="M372.3,61.4h12M378.3,55.4v12"/><path d="M372.3,98.9h12M378.3,92.9v12"/><path d="M372.3,136.4h12M378.3,130.4v12"/><path d="M372.3,173.9h12M378.3,167.9v12"/><path d="M372.3,211.4h12M378.3,205.4v12"/><path d="M409.8,23.9h12M415.8,17.9v12"/><path d="M409.8,61.4h12M415.8,55.4v12"/><path d="M409.8,98.9h12M415.8,92.9v12"/><path d="M409.8,136.4h12M415.8,130.4v12"/><path d="M409.8,173.9h12M415.8,167.9v12"/><path d="M409.8,211.4h12M415.8,205.4v12"/><path d="M447.4,23.9h12M453.4,17.9v12"/><path d="M447.4,61.4h12M453.4,55.4v12"/><path d="M447.4,98.9h12M453.4,92.9v12"/><path d="M447.4,136.4h12M453.4,130.4v12"/><path d="M447.4,173.9h12M453.4,167.9v12"/><path d="M447.4,211.4h12M453.4,205.4v12"/><path d="M485.0,23.9h12M491.0,17.9v12"/><path d="M485.0,61.4h12M491.0,55.4v12"/><path d="M485.0,98.9h12M491.0,92.9v12"/><path d="M485.0,136.4h12M491.0,130.4v12"/><path d="M485.0,173.9h12M491.0,167.9v12"/><path d="M485.0,211.4h12M491.0,205.4v12"/><path d="M522.5,23.9h12M528.5,17.9v12"/><path d="M522.5,61.4h12M528.5,55.4v12"/><path d="M522.5,98.9h12M528.5,92.9v12"/><path d="M522.5,136.4h12M528.5,130.4v12"/><path d="M522.5,173.9h12M528.5,167.9v12"/><path d="M522.5,211.4h12M528.5,205.4v12"/><path d="M560.0,23.9h12M566.0,17.9v12"/><path d="M560.0,61.4h12M566.0,55.4v12"/><path d="M560.0,98.9h12M566.0,92.9v12"/><path d="M560.0,136.4h12M566.0,130.4v12"/><path d="M560.0,173.9h12M566.0,167.9v12"/><path d="M560.0,211.4h12M566.0,205.4v12"/></g></svg>
<div class="t " style="left:254.3px;top:343.8px;font-size:8.5px;color:#d8d8d8">×</div>
<div class="t b" style="left:269.7px;top:344.0px;letter-spacing:0.02px;">Patch Editor</div>
<div class="t " style="left:256.4px;top:551.5px;letter-spacing:0.06px;color:#dcdcdc">Show Map</div>
<div class="t " style="left:752.3px;top:551.0px;font-size:11px;color:#dcdcdc">+</div>
<div class="t " style="left:763.5px;top:551.3px;letter-spacing:0.24px;color:#dcdcdc">Add Patch</div>
<div class="t b" style="left:830.8px;top:26.1px;letter-spacing:0.19px;">material0</div>
<div class="t " style="left:881.5px;top:26.1px;letter-spacing:0.05px;color:#a8a8a8">– Material</div>
<div class="t " style="left:830.8px;top:48.0px;letter-spacing:0.03px;">Shader Type</div>
<div class="f" style="left:903px;top:47px;width:134.5px;height:14.5px;background:#484848"></div>
<div class="t " style="left:906.5px;top:48.0px;letter-spacing:0.06px;color:#e8e8e8">Standard</div>
<svg style="left:1025.0px;top:52.099999999999994px;" width="7" height="5" viewBox="0 0 7 5"><path d="M0.800,0.800 L3.500,3.600 L6.200,0.800" fill="none" stroke="#d8d8d8" stroke-width="1.3"/></svg>
<div class="sep" style="top:66px"></div>
<div class="tri" style="left:830.4px;top:75.5px;border-top-color:#8a8a8a"></div>
<div class="t " style="left:843px;top:71.5px;letter-spacing:0.12px;">Shader Properties</div>
<div class="sep" style="top:89px"></div>
<div class="tri" style="left:843px;top:99.2px;border-top-color:#8a8a8a"></div>
<div class="t " style="left:855.8px;top:95.2px;letter-spacing:0.05px;">Diffuse</div>
<div class="t " style="left:855.8px;top:119.2px;letter-spacing:-0.06px;">Color</div>
<div class="a" style="left:929px;top:118.800px;width:18.500px;height:13px;background:#2a2a2a;border-radius:1.5px"></div>
<div class="a" style="left:930.300px;top:120px;width:16px;height:10.600px;background:#fff"></div>
<div class="a" style="left:841px;top:145.2px;width:10px;height:10px;border-radius:50%;background:#444444"></div>
<svg style="left:842px;top:146.2px;" width="8" height="8" viewBox="0 0 8 8"><path d="M1.600,4H5" fill="none" stroke="#f0f0f0" stroke-width="1.500"/><path d="M4.200,1.800L6.900,4L4.200,6.200Z" fill="#f0f0f0"/></svg>
<div class="t " style="left:855.8px;top:144.2px;letter-spacing:0.10px;">Texture</div>
<div class="f" style="left:928px;top:141.3px;width:39.5px;height:18.3px;background:#484848"></div>
<svg style="left:954.0px;top:148.3px;" width="7" height="5" viewBox="0 0 7 5"><path d="M0.800,0.800 L3.500,3.600 L6.200,0.800" fill="none" stroke="#d8d8d8" stroke-width="1.3"/></svg>
<div class="f" style="left:968.8px;top:141.3px;width:68.7px;height:18.3px;background:#484848"></div>
<div class="t " style="left:972px;top:144.4px;letter-spacing:-0.13px;color:#e8e8e8">File</div>
<div class="sep" style="top:164.5px"></div>
<div class="tri" style="left:843px;top:173.3px;border-top-color:#a0a0a0"></div>
<div class="t " style="left:855.8px;top:169.3px;letter-spacing:0.02px;color:#6e6e6e">Specular</div>
<div class="f" style="left:1027.2px;top:170px;width:10.3px;height:10.4px;background:#4a4a4a"></div>
<div class="t " style="left:855.8px;top:193.5px;letter-spacing:0.05px;color:#6e6e6e">Type</div>
<div class="f" style="left:928px;top:192.4px;width:109.5px;height:14.0px;background:#3e3e3e"></div>
<div class="t " style="left:931.5px;top:193.6px;letter-spacing:0.07px;color:#6e6e6e">Texture</div>
<svg style="left:1025.0px;top:197.60000000000002px;" width="7" height="5" viewBox="0 0 7 5"><path d="M0.800,0.800 L3.500,3.600 L6.200,0.800" fill="none" stroke="#6e6e6e" stroke-width="1.3"/></svg>
<div class="a" style="left:841px;top:219.8px;width:10px;height:10px;border-radius:50%;background:#3b3b3b"></div>
<svg style="left:842px;top:220.8px;" width="8" height="8" viewBox="0 0 8 8"><path d="M1.600,4H5" fill="none" stroke="#8c8c8c" stroke-width="1.500"/><path d="M4.200,1.800L6.900,4L4.200,6.200Z" fill="#8c8c8c"/></svg>
<div class="t " style="left:855.8px;top:218.8px;letter-spacing:0.10px;color:#6e6e6e">Texture</div>
<div class="f" style="left:928px;top:216px;width:39.5px;height:17.7px;background:#3e3e3e"></div>
<svg style="left:932.8px;top:217.8px;" width="14" height="14" viewBox="0 0 14 14"><rect width="14" height="14" fill="#777"/><g fill="#686868"><rect x="0.00" y="0.00" width="2.33" height="2.33"/><rect x="0.00" y="4.67" width="2.33" height="2.33"/><rect x="0.00" y="9.33" width="2.33" height="2.33"/><rect x="2.33" y="2.33" width="2.33" height="2.33"/><rect x="2.33" y="7.00" width="2.33" height="2.33"/><rect x="2.33" y="11.67" width="2.33" height="2.33"/><rect x="4.67" y="0.00" width="2.33" height="2.33"/><rect x="4.67" y="4.67" width="2.33" height="2.33"/><rect x="4.67" y="9.33" width="2.33" height="2.33"/><rect x="7.00" y="2.33" width="2.33" height="2.33"/><rect x="7.00" y="7.00" width="2.33" height="2.33"/><rect x="7.00" y="11.67" width="2.33" height="2.33"/><rect x="9.33" y="0.00" width="2.33" height="2.33"/><rect x="9.33" y="4.67" width="2.33" height="2.33"/><rect x="9.33" y="9.33" width="2.33" height="2.33"/><rect x="11.67" y="2.33" width="2.33" height="2.33"/><rect x="11.67" y="7.00" width="2.33" height="2.33"/><rect x="11.67" y="11.67" width="2.33" height="2.33"/></g></svg>
<svg style="left:954.0px;top:223.0px;" width="7" height="5" viewBox="0 0 7 5"><path d="M0.800,0.800 L3.500,3.600 L6.200,0.800" fill="none" stroke="#6e6e6e" stroke-width="1.3"/></svg>
<div class="f" style="left:968.8px;top:216px;width:68.7px;height:17.7px;background:#3e3e3e"></div>
<div class="t " style="left:972px;top:218.9px;letter-spacing:0.03px;color:#6e6e6e">Choose File...</div>
<div class="t " style="left:855.8px;top:244.3px;letter-spacing:0.07px;color:#6e6e6e">Smoothness</div>
<div class="a" style="left:933px;top:249.8px;width:49px;height:1px;background:#444;"></div>
<div class="a" style="left:928.200px;top:245.500px;width:9.600px;height:9.600px;border-radius:50%;background:#8c8c8c"></div>
<div class="f" style="left:992.3px;top:243.4px;width:45.2px;height:14.0px;background:#3e3e3e"></div>
<div class="t " style="left:998.5px;top:244.5px;color:#6e6e6e">0</div>
<div class="t " style="left:1029px;top:244.5px;color:#4e4e4e;font-size:7px">%</div>
<div class="sep" style="top:262px"></div>
<div class="trr" style="left:844.5px;top:270.4px;border-left-color:#a0a0a0"></div>
<div class="t " style="left:855.8px;top:267.4px;letter-spacing:0.03px;color:#6e6e6e">Normal</div>
<div class="f" style="left:1027.2px;top:268.2px;width:10.3px;height:10.4px;background:#4a4a4a"></div>
<div class="sep" style="top:285.5px"></div>
<div class="tri" style="left:843px;top:295.1px;border-top-color:#a0a0a0"></div>
<div class="t " style="left:855.8px;top:291.1px;letter-spacing:-0.04px;color:#6e6e6e">Emission</div>
<div class="f" style="left:1027.2px;top:292px;width:10.3px;height:10.4px;background:#4a4a4a"></div>
<div class="t " style="left:855.8px;top:315.3px;letter-spacing:-0.06px;color:#6e6e6e">Color</div>
<div class="a" style="left:929px;top:314.800px;width:18.500px;height:13px;background:#2a2a2a;border-radius:1.5px"></div>
<div class="a" style="left:930.300px;top:316px;width:16px;height:10.600px;background:#1c1c1c"></div>
<div class="a" style="left:841px;top:341.3px;width:10px;height:10px;border-radius:50%;background:#3b3b3b"></div>
<svg style="left:842px;top:342.3px;" width="8" height="8" viewBox="0 0 8 8"><path d="M1.600,4H5" fill="none" stroke="#8c8c8c" stroke-width="1.500"/><path d="M4.200,1.800L6.900,4L4.200,6.200Z" fill="#8c8c8c"/></svg>
<div class="t " style="left:855.8px;top:340.3px;letter-spacing:0.10px;color:#6e6e6e">Texture</div>
<div class="f" style="left:928px;top:337.2px;width:39.5px;height:18.1px;background:#3e3e3e"></div>
<svg style="left:932.8px;top:339.2px;" width="14" height="14" viewBox="0 0 14 14"><rect width="14" height="14" fill="#777"/><g fill="#686868"><rect x="0.00" y="0.00" width="2.33" height="2.33"/><rect x="0.00" y="4.67" width="2.33" height="2.33"/><rect x="0.00" y="9.33" width="2.33" height="2.33"/><rect x="2.33" y="2.33" width="2.33" height="2.33"/><rect x="2.33" y="7.00" width="2.33" height="2.33"/><rect x="2.33" y="11.67" width="2.33" height="2.33"/><rect x="4.67" y="0.00" width="2.33" height="2.33"/><rect x="4.67" y="4.67" width="2.33" height="2.33"/><rect x="4.67" y="9.33" width="2.33" height="2.33"/><rect x="7.00" y="2.33" width="2.33" height="2.33"/><rect x="7.00" y="7.00" width="2.33" height="2.33"/><rect x="7.00" y="11.67" width="2.33" height="2.33"/><rect x="9.33" y="0.00" width="2.33" height="2.33"/><rect x="9.33" y="4.67" width="2.33" height="2.33"/><rect x="9.33" y="9.33" width="2.33" height="2.33"/><rect x="11.67" y="2.33" width="2.33" height="2.33"/><rect x="11.67" y="7.00" width="2.33" height="2.33"/><rect x="11.67" y="11.67" width="2.33" height="2.33"/></g></svg>
<svg style="left:954.0px;top:344.5px;" width="7" height="5" viewBox="0 0 7 5"><path d="M0.800,0.800 L3.500,3.600 L6.200,0.800" fill="none" stroke="#6e6e6e" stroke-width="1.3"/></svg>
<div class="f" style="left:968.8px;top:337.2px;width:68.7px;height:18.1px;background:#3e3e3e"></div>
<div class="t " style="left:972px;top:340.5px;letter-spacing:0.03px;color:#6e6e6e">Choose File...</div>
<div class="sep" style="top:360px"></div>
<div class="trr" style="left:844.5px;top:368.6px;border-left-color:#a0a0a0"></div>
<div class="t " style="left:855.8px;top:365.6px;letter-spacing:0.04px;color:#6e6e6e">Alpha</div>
<div class="f" style="left:1027.2px;top:366.5px;width:10.3px;height:10.4px;background:#4a4a4a"></div>
<div class="sep" style="top:383.8px"></div>
<div class="tri" style="left:830.4px;top:393.4px;border-top-color:#8a8a8a"></div>
<div class="t " style="left:843px;top:389.4px;letter-spacing:0.17px;">Tiling Options</div>
<div class="t " style="left:843px;top:413.1px;letter-spacing:0.08px;">Tile</div>
<div class="f" style="left:915px;top:412px;width:54.3px;height:14.5px;background:#484848"></div>
<div class="t " style="left:921px;top:413.4px;color:#e8e8e8">1</div>
<div class="f" style="left:983.9px;top:412px;width:53.6px;height:14.5px;background:#484848"></div>
<div class="t " style="left:990px;top:413.4px;color:#e8e8e8">1</div>
<div class="t " style="left:843px;top:437.1px;letter-spacing:0.28px;">Offset</div>
<div class="f" style="left:915px;top:435.7px;width:54.3px;height:15.1px;background:#484848"></div>
<div class="t " style="left:921px;top:437.4px;color:#e8e8e8">0</div>
<div class="f" style="left:983.9px;top:435.7px;width:53.6px;height:15.1px;background:#484848"></div>
<div class="t " style="left:990px;top:437.4px;color:#e8e8e8">0</div>
<div class="sep" style="top:454.6px"></div>
<div class="tri" style="left:830.4px;top:464.3px;border-top-color:#8a8a8a"></div>
<div class="t " style="left:843px;top:460.3px;letter-spacing:0.07px;">Render Options</div>
<div class="t " style="left:843px;top:484.3px;letter-spacing:0.10px;">Blend Mode</div>
<div class="f" style="left:915px;top:483.4px;width:122.5px;height:14.6px;background:#484848"></div>
<div class="t " style="left:918.5px;top:484.5px;letter-spacing:-0.00px;color:#e8e8e8">Alpha</div>
<svg style="left:1025.0px;top:488.6px;" width="7" height="5" viewBox="0 0 7 5"><path d="M0.800,0.800 L3.500,3.600 L6.200,0.800" fill="none" stroke="#d8d8d8" stroke-width="1.3"/></svg>
<div class="t " style="left:843px;top:508.0px;letter-spacing:0.11px;">Cull Mode</div>
<div class="f" style="left:915px;top:506.9px;width:122.5px;height:14.8px;background:#484848"></div>
<div class="t " style="left:918.5px;top:508.2px;letter-spacing:-0.00px;color:#e8e8e8">Back</div>
<svg style="left:1025.0px;top:512.3px;" width="7" height="5" viewBox="0 0 7 5"><path d="M0.800,0.800 L3.500,3.600 L6.200,0.800" fill="none" stroke="#d8d8d8" stroke-width="1.3"/></svg>
<div class="t " style="left:843px;top:531.8px;letter-spacing:0.14px;">Opacity</div>
<div class="a" style="left:915px;top:536.3px;width:63px;height:3px;background:#1a93ff;border-radius:1.5px"></div>
<div class="a" style="left:973.500px;top:533px;width:9.600px;height:9.600px;border-radius:50%;background:#fff"></div>
<div class="f" style="left:992px;top:530.4px;width:45.5px;height:14.5px;background:#484848"></div>
<div class="t " style="left:997.5px;top:532.0px;letter-spacing:-0.17px;color:#e8e8e8">100</div>
<div class="t " style="left:1029px;top:532.0px;color:#7a7a7a;font-size:7px">%</div>
<div class="t " style="left:843px;top:555.0px;letter-spacing:0.08px;">Double Sided</div>
<div class="f" style="left:915.4px;top:555.6px;width:10.3px;height:10.4px;background:#4a4a4a"></div>
<div class="a" style="left:818.3px;top:521px;width:3.5px;height:27px;background:#b4b4b4;border-radius:2px"></div>
<div class="a" style="left:71.5px;top:362px;width:221.5px;height:100.5px;background:#2a2a2a;border-radius:5px;box-shadow:0 0 3px rgba(0,0,0,0.45)"></div>
<div class="a" style="left:68.2px;top:447px;width:0;height:0;border-top:4px solid transparent;border-bottom:4px solid transparent;border-right:4px solid #2a2a2a"></div>
<div class="a" style="left:66.3px;top:376px;width:5px;height:19px;background:#1a93ff;"></div>
<div class="tri" style="left:87.3px;top:379.1px;border-top-color:#9a9a9a"></div>
<div class="t b" style="left:102.8px;top:375.1px;letter-spacing:0.04px;">Preview on Spark AR Player</div>
<svg style="left:86.7px;top:394.2px;" width="6" height="10" viewBox="0 0 6 10"><rect x="0.700" y="0.700" width="4.600" height="8.600" rx="1" fill="none" stroke="#c8c8c8" stroke-width="1"/></svg>
<div class="t " style="left:102.8px;top:393.2px;letter-spacing:-0.04px;">iPhone</div>
<div class="a" style="left:218.9px;top:390.8px;width:61.7px;height:15.9px;background:#787878;border-radius:2.5px"></div>
<div class="t " style="left:238.8px;top:392.8px;letter-spacing:0.05px;color:#f4f4f4">Send</div>
<div class="trr" style="left:87.7px;top:442px;border-left-color:#8a8a8a"></div>
<div class="t b" style="left:102.8px;top:439.0px;letter-spacing:0.09px;">Send to App</div>
<svg style="left:0px;top:0px;" width="1080" height="588" viewBox="0 0 1080 588"><path fill-rule="evenodd" fill="#e0281d" d="M37,352.400H304.100V474.500H37Z M41.100,356.800H300V470.100H41.100Z"/></svg>
<div class="a" style="left:37px;top:20px;width:1006px;height:1px;background:rgba(255,255,255,0.45);"></div>
</div>
</body></html>
